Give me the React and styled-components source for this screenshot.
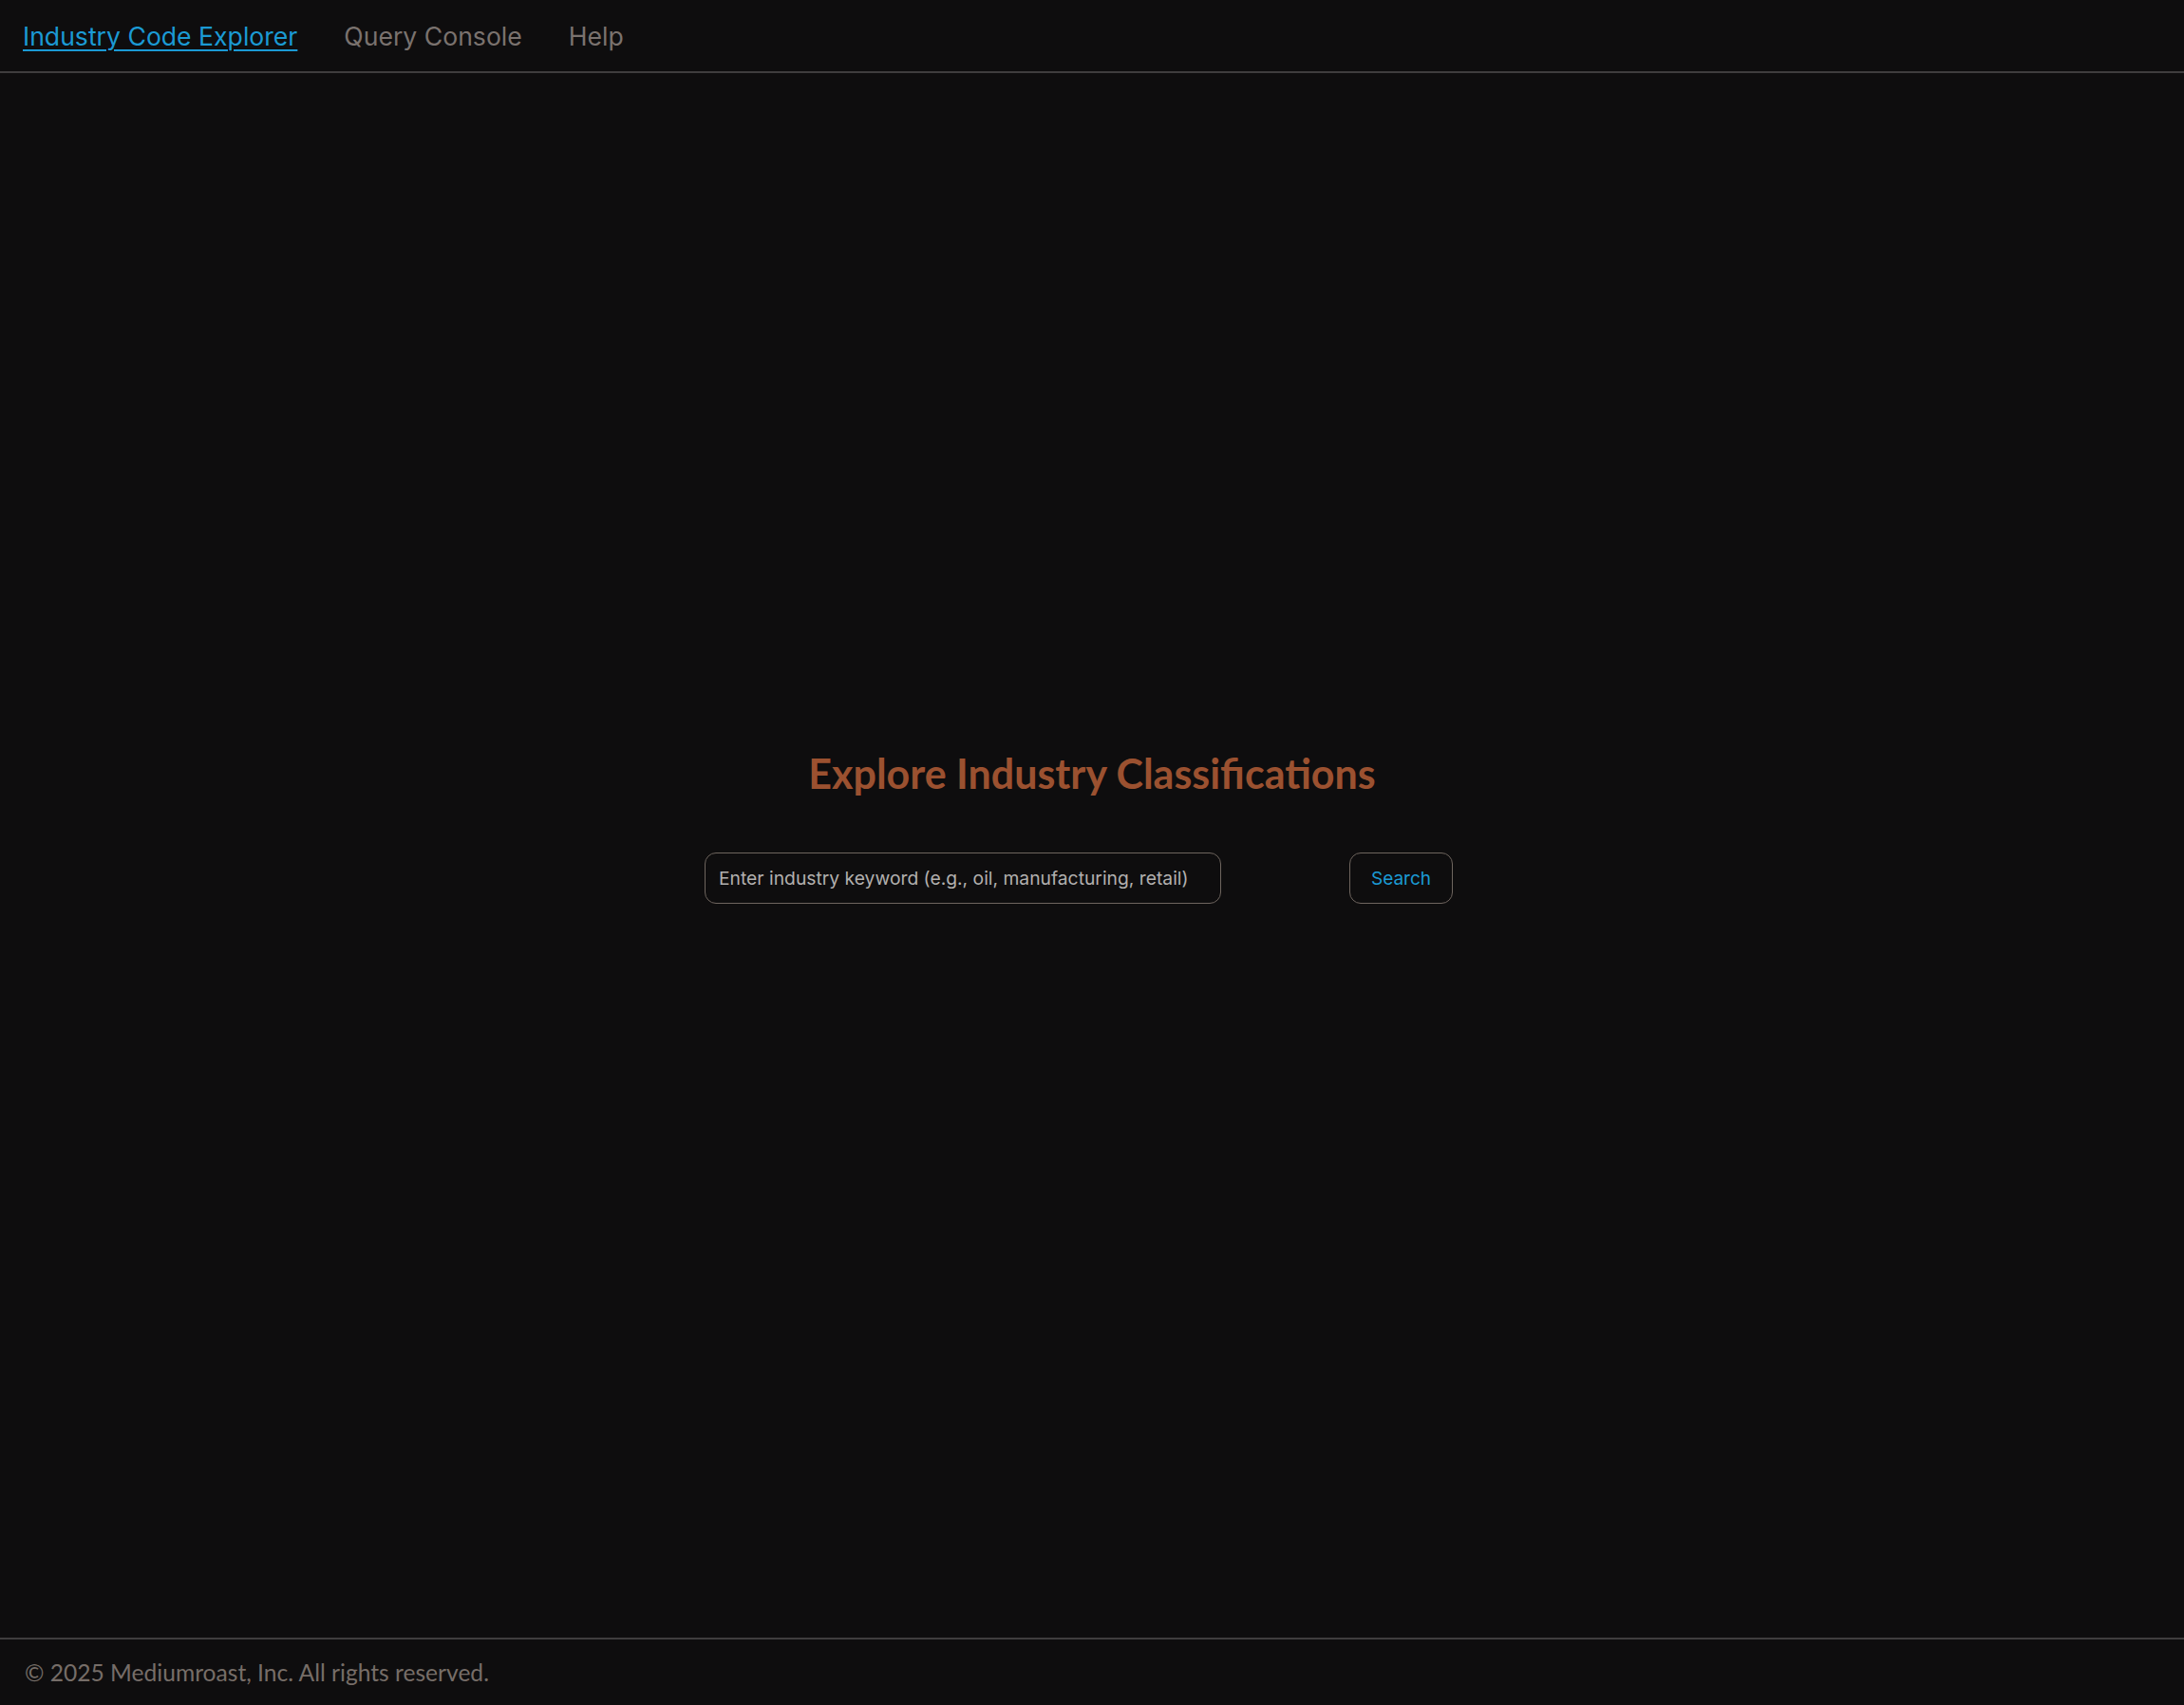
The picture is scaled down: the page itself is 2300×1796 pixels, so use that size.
import React from "react";
import styled, { createGlobalStyle } from "styled-components";

const Global = createGlobalStyle`
  html, body { margin: 0; padding: 0; background: #0e0d0e; }
  body { font-family: Inter, Roboto, "Noto Sans", sans-serif; }
  * { box-sizing: border-box; }
`;

const Page = styled.div`
  min-height: 100vh;
  display: flex;
  flex-direction: column;
  background: #0e0d0e;
`;

const Header = styled.header`
  height: 77px;
  display: flex;
  align-items: center;
  gap: 49px;
  padding: 2px 24px 0;
  border-bottom: 2px solid #3f3d3e;
`;

const NavLink = styled.a`
  font-family: Inter, Roboto, "Noto Sans", sans-serif;
  font-size: 26.6px;
  color: ${(p) => (p.$active ? "#1b9ad4" : "#7a726e")};
  text-decoration: ${(p) => (p.$active ? "underline" : "none")};
  text-underline-offset: 4px;
  text-decoration-thickness: 2px;
  cursor: pointer;
  line-height: 1;
`;

const Main = styled.main`
  flex: 1;
  display: flex;
  flex-direction: column;
  align-items: center;
  justify-content: center;
  padding-bottom: 61px;
`;

const Title = styled.h1`
  margin: 0 0 57px;
  font-family: Lato, "Noto Sans", sans-serif;
  font-weight: 700;
  font-size: 43px;
  line-height: 52px;
  color: #9b5130;
  text-align: center;
`;

const Form = styled.form`
  width: 816px;
  display: flex;
  gap: 135px;
`;

const Input = styled.input`
  width: 544px;
  height: 54px;
  padding: 0 14px;
  background: #0e0d0e;
  border: 1.5px solid #6e655e;
  border-radius: 12px;
  color: #d0d0d0;
  font-family: Inter, Roboto, "Noto Sans", sans-serif;
  font-size: 19.3px;
  outline: none;
  &::placeholder { color: #b2b0ae; }
`;

const Button = styled.button`
  width: 109px;
  height: 54px;
  padding: 0;
  background: #0e0d0e;
  border: 1.5px solid #6e655e;
  border-radius: 12px;
  color: #1b9ad4;
  font-family: Inter, Roboto, "Noto Sans", sans-serif;
  font-size: 19px;
  cursor: pointer;
`;

const Footer = styled.footer`
  height: 71px;
  display: flex;
  align-items: center;
  padding: 0 26px;
  border-top: 2px solid #3f3d3e;
  font-family: Lato, "Noto Sans", sans-serif;
  font-size: 24.6px;
  color: #766d68;
`;

export default function App() {
  return (
    <>
      <Global />
      <Page>
        <Header>
          <NavLink $active>Industry Code Explorer</NavLink>
          <NavLink>Query Console</NavLink>
          <NavLink>Help</NavLink>
        </Header>
        <Main>
          <Title>Explore Industry Classifications</Title>
          <Form onSubmit={(e) => e.preventDefault()}>
            <Input placeholder="Enter industry keyword (e.g., oil, manufacturing, retail)" />
            <Button type="submit">Search</Button>
          </Form>
        </Main>
        <Footer>© 2025 Mediumroast, Inc. All rights reserved.</Footer>
      </Page>
    </>
  );
}
